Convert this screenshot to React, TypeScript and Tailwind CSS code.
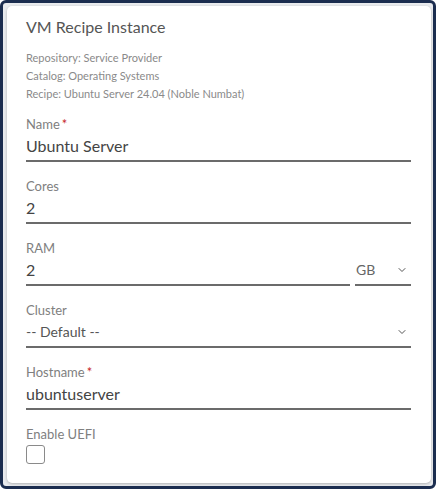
import React from 'react';
import { ChevronDown } from 'lucide-react';

const font = { fontFamily: 'Lato, "Noto Sans", sans-serif' };

const Label: React.FC<{ text: string; required?: boolean }> = ({ text, required }) => (
  <div className="text-[13px] leading-[16px] text-[#808080]">
    {text}
    {required && <span className="ml-[2px] text-[#c62828]">*</span>}
  </div>
);

const Field: React.FC<{ label: string; value: string; required?: boolean; select?: boolean }> = ({
  label,
  value,
  required,
  select,
}) => (
  <div>
    <Label text={label} required={required} />
    <div className="mt-[3px] flex items-center justify-between border-b-2 border-[#6b6b6b] pb-[3px] leading-[22px]">
      <span className={select ? 'text-[14px] text-[#555]' : 'text-[16px] text-[#444]'}>{value}</span>
      {select && <ChevronDown size={12} strokeWidth={2} className="mr-[3px] text-[#555]" />}
    </div>
  </div>
);

export default function App() {
  return (
    <div
      className="h-[489px] w-[436px] rounded-[6px] border-[3px] border-[#1b2d4f] bg-[#e9ebee] pb-[3px] pl-[4px] pr-[2px] pt-[3px]"
      style={font}
    >
      <div className="flex h-full flex-col rounded-[5px] bg-white pl-[19px] pr-[20px] pt-[11px] shadow-[0_1px_3px_rgba(0,0,0,0.25)]">
        <h1 className="text-[16px] leading-[20px] text-[#555]">VM Recipe Instance</h1>
        <div className="mt-[12px] text-[11px] leading-[18px] text-[#8a8a8a]">
          <div>Repository: Service Provider</div>
          <div>Catalog: Operating Systems</div>
          <div>Recipe: Ubuntu Server 24.04 (Noble Numbat)</div>
        </div>

        <div className="mt-[13px] flex flex-col gap-[16px]">
          <Field label="Name" value="Ubuntu Server" required />
          <Field label="Cores" value="2" />

          <div>
            <Label text="RAM" />
            <div className="mt-[3px] flex gap-[5px]">
              <div className="flex-1 border-b-2 border-[#6b6b6b] pb-[3px] text-[16px] leading-[22px] text-[#444]">2</div>
              <div className="flex w-[56px] items-center justify-between border-b-2 border-[#6b6b6b] pb-[3px] pl-[1px] leading-[22px]">
                <span className="text-[14px] text-[#666]">GB</span>
                <ChevronDown size={12} strokeWidth={2} className="mr-[3px] text-[#555]" />
              </div>
            </div>
          </div>

          <Field label="Cluster" value="-- Default --" select />
          <Field label="Hostname" value="ubuntuserver" required />

          <div>
            <Label text="Enable UEFI" />
            <div className="mt-[3px] h-[19px] w-[19px] rounded-[3px] border border-[#8a8a8a] bg-white" />
          </div>
        </div>
      </div>
    </div>
  );
}
